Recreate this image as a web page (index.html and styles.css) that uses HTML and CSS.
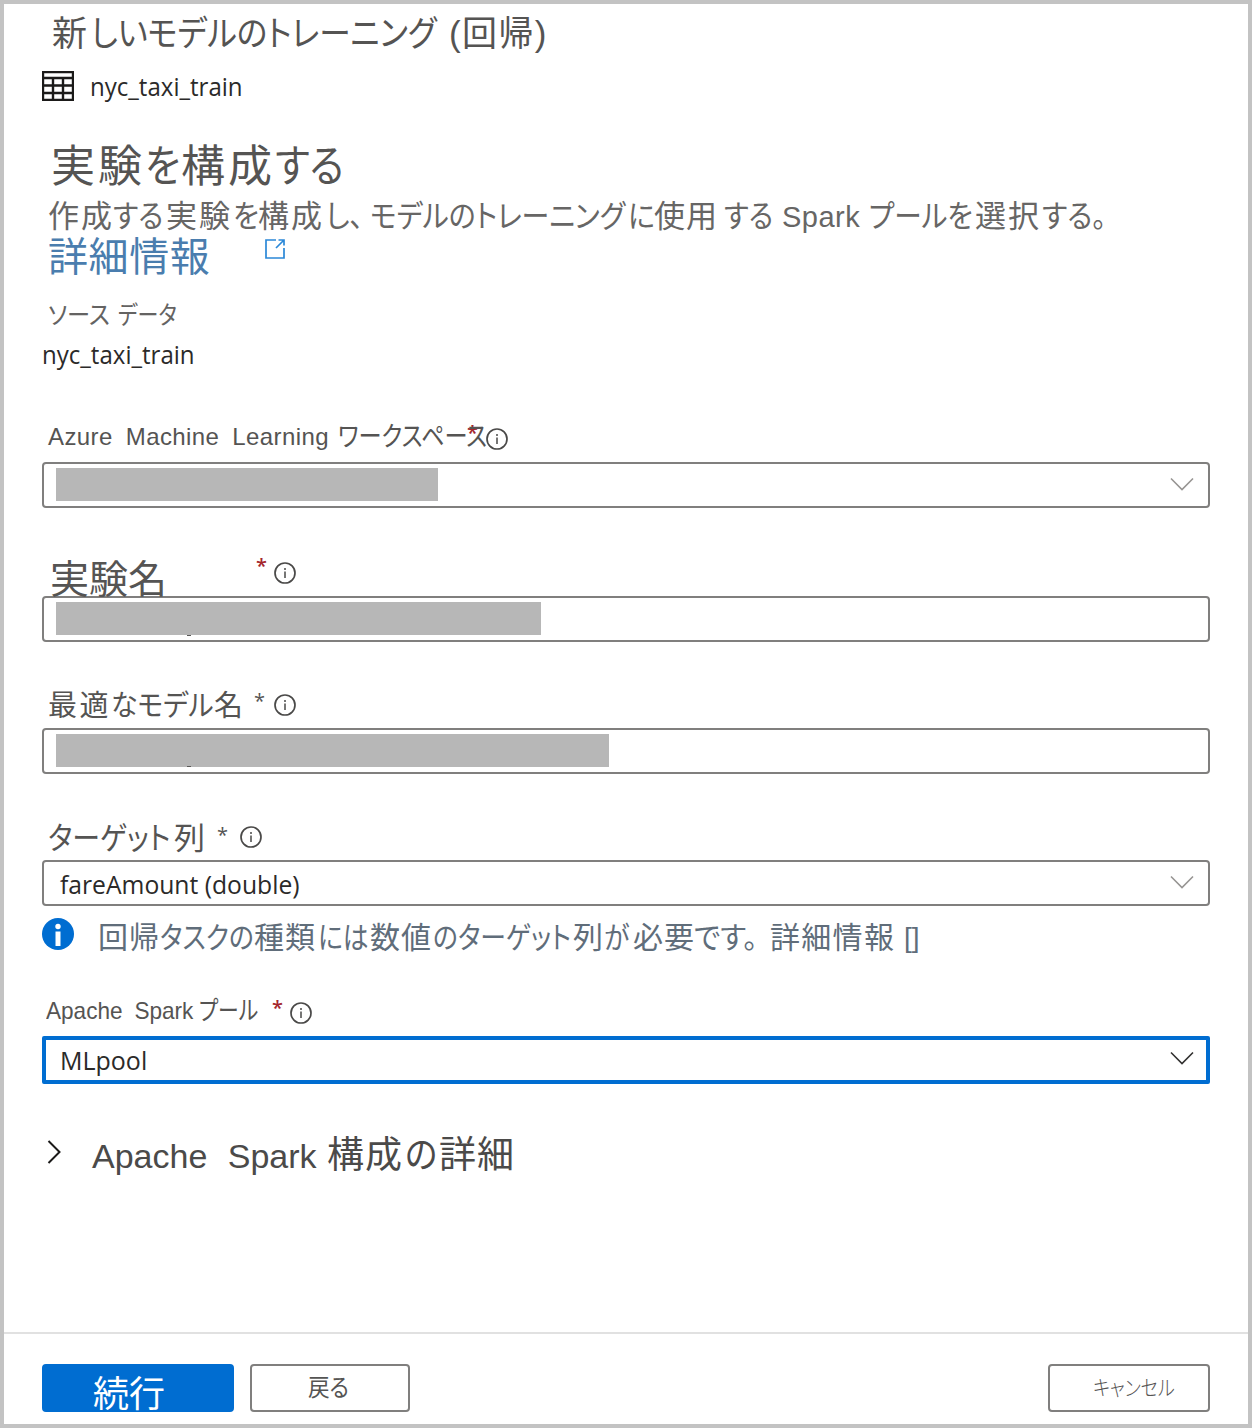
FILE: index.html
```html
<!DOCTYPE html>
<html lang="ja">
<head>
<meta charset="utf-8">
<title>新しいモデルのトレーニング</title>
<link rel="stylesheet" href="styles.css">
</head>
<body>
<svg class="defs" aria-hidden="true">
  <symbol id="info" viewBox="0 0 22 22"><circle cx="11" cy="11" r="10" fill="none" stroke="currentColor" stroke-width="1.7"/><path d="M11 9.500v6.500M11 6v2" stroke="currentColor" stroke-width="1.500"/></symbol>
  <symbol id="chevron" viewBox="0 0 24 14"><path d="M1 1.500l11 11 11-11" fill="none" stroke="currentColor" stroke-width="1.600"/></symbol>
</svg>
<div class="panel">
  <main class="content">
    <h1 class="title"><span class="kanji">新</span><span class="kana">しいモデルのトレーニング</span><span class="kanji">(回帰)</span></h1>
    <div class="file">
      <svg class="table-icon" viewBox="0 0 32 30"><path d="M1 1h30v28H1zM1 7h30M1 14.500h30M1 22h30M11 7v22M21 7v22" fill="none" stroke="#1b1a19" stroke-width="2.400"/></svg>
      <span class="segoe">nyc_taxi_train</span>
    </div>
    <h2 class="heading"><span class="kanji">実験</span><span class="kana">を</span><span class="kanji">構成</span><span class="kana">する</span></h2>
    <p class="desc"><span class="kanji">作成</span><span class="kana">する</span><span class="kanji">実験</span><span class="kana">を</span><span class="kanji">構成</span><span class="kana">し、</span><span class="kana">モデルのトレーニング</span><span class="kana">に</span><span class="kanji">使用</span><span class="kana">する</span><span class="latin">Spark</span><span class="kana">プールを</span><span class="kanji">選択</span><span class="kana">する。</span></p>
    <div class="more">
      <a class="link">詳細情報</a>
      <svg class="external" viewBox="0 0 22 22"><path d="M12 2H2v18h18V10M14.500 2H20v5.500M20 2l-8 8" fill="none" stroke="#2b88d8" stroke-width="1.700"/></svg>
    </div>
    <div class="source-label"><span class="kana">ソース</span><span class="kana">データ</span></div>
    <div class="source-value"><span class="segoe">nyc_taxi_train</span></div>

    <div class="label label-workspace">
      <span class="latin">Azure Machine Learning</span><span class="kana">ワークスペース</span><span class="star required">*</span><svg class="info"><use href="#info"/></svg>
    </div>
    <div class="field"><span class="masked masked-workspace"></span><svg class="chevron"><use href="#chevron"/></svg></div>

    <div class="label label-experiment">
      <span class="kanji">実験名</span><span class="star required">*</span><svg class="info"><use href="#info"/></svg>
    </div>
    <div class="field"><span class="masked masked-experiment"></span></div>

    <div class="label label-model">
      <span class="kanji first">最適</span><span class="kana">なモデル</span><span class="kanji last">名</span><span class="star">*</span><svg class="info"><use href="#info"/></svg>
    </div>
    <div class="field"><span class="masked masked-model"></span></div>

    <div class="label label-target">
      <span class="kana">ターゲット</span><span class="kanji">列</span><span class="star">*</span><svg class="info"><use href="#info"/></svg>
    </div>
    <div class="field"><span class="value value-target segoe">fareAmount (double)</span><svg class="chevron"><use href="#chevron"/></svg></div>

    <div class="message">
      <svg class="message-icon" viewBox="0 0 32 32"><circle cx="16" cy="16" r="16" fill="#006dd1"/><circle cx="16" cy="8.500" r="2.700" fill="#fff"/><path d="M13.500 13.500h5V28h-5z" fill="#fff"/></svg>
      <p class="message-text"><span class="kanji">回帰</span><span class="kana">タスクの</span><span class="kanji">種類</span><span class="kana">には</span><span class="kanji">数値</span><span class="kana">のターゲット</span><span class="kanji">列</span><span class="kana">が</span><span class="kanji">必要</span><span class="kana">です。</span><span class="kanji">詳細情報</span><span class="latin">[]</span></p>
    </div>

    <div class="label label-pool">
      <span class="latin">Apache Spark</span><span class="kana">プール</span><span class="star required">*</span><svg class="info"><use href="#info"/></svg>
    </div>
    <div class="field focused"><span class="value value-pool segoe">MLpool</span><svg class="chevron"><use href="#chevron"/></svg></div>

    <div class="details">
      <svg class="expand" viewBox="0 0 14 24"><path d="M1.500 1l11 11-11 11" fill="none" stroke="#1b1a19" stroke-width="2"/></svg>
      <span class="latin">Apache Spark</span><span class="kanji">構成</span><span class="kana">の</span><span class="kanji">詳細</span>
    </div>
  </main>
  <footer class="footer">
    <button class="btn primary">続行</button>
    <button class="btn back"><span class="kana">戻る</span></button>
    <button class="btn cancel"><span class="kana">キャンセル</span></button>
  </footer>
</div>
</body>
</html>
```

FILE: styles.css
```css
* { box-sizing: border-box; margin: 0; }
body {
  background: #fff;
  font-family: "Liberation Sans", "Noto Sans CJK JP", sans-serif;
  font-feature-settings: "palt";
  color: #555453;
}
.defs { display: none; }
svg { display: block; flex: none; }
.panel {
  width: 1252px;
  height: 1428px;
  border: 4px solid #c3c3c3;
  display: flex;
  flex-direction: column;
  overflow: hidden;
}
.content { flex: 1; padding: 0 38px; }

/* Text runs: kana is set condensed, kanji slightly tracked out */
.kanji, .kana, .latin { display: block; flex: none; white-space: nowrap; transform-origin: left center; }
.kanji { letter-spacing: 1px; }
.kana { transform: scaleX(.9); }
.segoe {
  display: block;
  font-family: "Open Sans", sans-serif;
  font-size: 25px;
  color: #2b2a29;
  white-space: nowrap;
  transform: scaleX(.962);
  transform-origin: left center;
}

.title { display: flex; height: 60px; line-height: 60px; padding-left: 10px; font-size: 35px; font-weight: 400; }
.title > :nth-child(1) { width: 39px; }
.title > :nth-child(2) { width: 358px; transform: scaleX(.903); }
.title > :nth-child(3) { letter-spacing: 1.4px; }
.file { height: 44px; display: flex; align-items: center; gap: 16px; }
.table-icon { width: 32px; height: 30px; }
.heading { display: flex; margin-top: 33px; height: 50px; line-height: 51px; padding-left: 9px; font-size: 44px; font-weight: 400; }
.heading .kanji { letter-spacing: 3px; }
.heading .kana { transform: scaleX(.87); }
.heading > :nth-child(1) { width: 94px; }
.heading > :nth-child(2) { width: 36px; }
.heading > :nth-child(3) { width: 94px; }
.desc { display: flex; margin-top: 5px; height: 40px; line-height: 42px; padding-left: 6px; font-size: 31px; color: #676665; }
.desc .kanji { letter-spacing: 2px; }
.desc > :nth-child(1) { width: 65px; }
.desc > :nth-child(2) { width: 53px; }
.desc > :nth-child(3) { width: 67px; }
.desc > :nth-child(4) { width: 25px; }
.desc > :nth-child(5) { width: 68px; }
.desc > :nth-child(6) { width: 44px; }
.desc > :nth-child(7) { width: 258px; }
.desc > :nth-child(8) { width: 26px; }
.desc > :nth-child(9) { width: 70px; letter-spacing: 1px; }
.desc > :nth-child(10) { width: 58px; transform: scaleX(.88); }
.desc > :nth-child(11) { width: 87px; font-size: 29px; letter-spacing: .5px; }
.desc > :nth-child(12) { width: 106px; transform: scaleX(.89); }
.desc > :nth-child(13) { width: 67px; }
.desc > :nth-child(14) { transform: scaleX(.9); }
.more { height: 40px; line-height: 42px; display: flex; padding-left: 6px; }
.link { width: 216px; font-size: 40px; letter-spacing: .6px; color: #4a7dae; }
.external { width: 22px; height: 22px; margin-top: 2px; }
.source-label { display: flex; margin-top: 24px; height: 30px; line-height: 30px; padding-left: 6px; font-size: 25px; color: #646362; }
.source-label .kana:first-child { width: 70px; transform: scaleX(.93); }
.source-label .kana { transform: scaleX(.84); }
.source-value { margin-top: 4px; height: 41px; line-height: 40px; }

.label { display: flex; }
.info { width: 22px; height: 22px; color: #4a4948; }
.star { font-family: "Open Sans", sans-serif; font-size: 20px; line-height: 30px; width: 16px; }
.required { font-weight: 600; color: #a4262c; }
.field {
  height: 46px;
  border: 2px solid #807f7e;
  border-radius: 4px;
  display: flex;
  align-items: center;
  padding: 0 14px 0 12px;
}
.focused { height: 48px; border: 4px solid #006dd1; border-radius: 2px; padding: 0 12px 0 10px; }
.masked { position: relative; height: 33px; background: #b7b7b7; }
.masked-workspace { width: 382px; margin-top: -1px; }
.masked-experiment { width: 485px; margin-top: -1px; }
.masked-model { width: 553px; margin-top: -1px; }
/* sliver of the covered value's descender */
.masked-experiment::after, .masked-model::after {
  content: "";
  position: absolute;
  left: 131px;
  bottom: -1px;
  width: 4px;
  height: 1px;
  background: #5a5958;
}
.masked-model::after { bottom: 0; }
.value { margin-left: 4px; line-height: 42px; }
.value-target { transform: scaleX(.987) translateY(1px); }
.value-pool { transform: none; }
.chevron { width: 24px; height: 14px; margin: -2px 0 0 auto; color: #979593; }
.focused .chevron { margin-top: -4px; color: #323130; }

.label-workspace { margin-top: 37px; height: 50px; padding-left: 6px; line-height: 50px; }
.label-workspace .latin { width: 290px; font-size: 24px; letter-spacing: .4px; word-spacing: 6px; }
.label-workspace .kana { width: 129px; font-size: 27px; transform: scaleX(.86); }
.label-workspace .star { margin-top: 6px; width: 19px; }
.label-workspace .info { margin-top: 16px; }

.label-experiment { margin-top: 38px; height: 50px; padding-left: 8px; line-height: 68px; }
.label-experiment .kanji { width: 206px; font-size: 39px; letter-spacing: 0; }
.label-experiment .star { margin-top: 5px; width: 18px; }
.label-experiment .info { margin-top: 16px; }

.label-model { margin-top: 38px; height: 48px; padding-left: 6px; line-height: 52px; font-size: 29px; }
.label-model .first { width: 63px; letter-spacing: 2.500px; }
.label-model .kana { width: 103px; transform: scaleX(.93); }
.label-model .last { width: 40px; }
.label-model .star { margin-top: 6px; width: 20px; }
.label-model .info { margin-top: 14px; }

.label-target { margin-top: 38px; height: 48px; padding-left: 6px; line-height: 54px; font-size: 31px; }
.label-target .kana { width: 126px; transform: scaleX(.9); }
.label-target .kanji { width: 43px; }
.label-target .star { margin-top: 8px; width: 23px; }
.label-target .info { margin-top: 14px; }

.message { display: flex; height: 60px; padding-top: 12px; font-size: 30px; line-height: 40px; color: #606d7a; }
.message-icon { width: 32px; height: 32px; }
.message-text { display: flex; margin-left: 24px; }
.message-text .kana { transform: scaleX(.86); }
.message-text > :nth-child(1) { width: 62px; }
.message-text > :nth-child(2) { width: 94px; }
.message-text > :nth-child(3) { width: 64px; }
.message-text > :nth-child(4) { width: 52px; }
.message-text > :nth-child(5) { width: 63px; }
.message-text > :nth-child(6) { width: 140px; }
.message-text > :nth-child(7) { width: 31px; }
.message-text > :nth-child(8) { width: 29px; }
.message-text > :nth-child(9) { width: 61px; }
.message-text > :nth-child(10) { width: 76px; transform: scaleX(.95); }
.message-text > :nth-child(11) { width: 134px; letter-spacing: 1.300px; }
.message-text > :nth-child(12) { font-size: 28px; }

.label-pool { margin-top: 22px; height: 48px; padding-left: 4px; line-height: 46px; }
.label-pool .latin { width: 153px; font-size: 24px; word-spacing: 6px; transform: scaleX(.94); }
.label-pool .kana { width: 73px; font-size: 26px; transform: scaleX(.8); }
.label-pool .star { margin-top: 5px; width: 18px; }
.label-pool .info { margin-top: 14px; }

.details { display: flex; margin-top: 46px; height: 50px; padding-left: 5px; line-height: 52px; color: #4b4a49; font-size: 37px; }
.expand { width: 14px; height: 24px; margin-top: 10px; }
.details .latin { width: 235px; margin-left: 31px; font-size: 34px; word-spacing: 11px; }
.details .kanji { width: 78px; }
.details .kana { width: 34px; }

.footer { height: 92px; border-top: 2px solid #e1e1e1; padding: 30px 38px 0; display: flex; gap: 16px; }
.btn {
  height: 48px;
  border: 2px solid #807f7e;
  border-radius: 4px;
  background: #fff;
  padding: 0;
  font-family: inherit;
  font-feature-settings: inherit;
  color: #555453;
  text-align: left;
}
.primary { width: 192px; border-color: #006dd1; background: #006dd1; color: #fff; font-size: 36px; line-height: 44px; padding: 7px 0 0 49px; }
.back { width: 160px; font-size: 24px; line-height: 44px; padding-left: 56px; }
.cancel { width: 162px; margin-left: auto; font-size: 21px; font-weight: 300; line-height: 44px; padding-left: 43px; }
.cancel .kana { transform: scaleX(.86); }
```
